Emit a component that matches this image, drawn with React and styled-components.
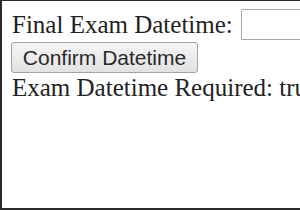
import React from "react";
import styled, { createGlobalStyle } from "styled-components";

const Global = createGlobalStyle`
  html, body { margin: 0; padding: 0; background: #fff; }
  #root { width: 300px; height: 210px; }
`;

const Frame = styled.div`
  box-sizing: border-box;
  width: 300px;
  height: 210px;
  overflow: hidden;
  border-top: 1px solid #2a2a2a;
  border-left: 2px solid #2a2a2a;
  border-bottom: 2px solid #2a2a2a;
  padding: 8px 0 0 10px;
  font-family: "Liberation Serif", "Times New Roman", serif;
  font-size: 25px;
  color: #222;
  background: #fff;
`;

const Row = styled.div`
  display: flex;
  align-items: center;
  height: 31px;
  white-space: nowrap;
`;

const Label = styled.span`
  line-height: 31px;
`;

const DateInput = styled.input`
  box-sizing: border-box;
  flex: none;
  width: 120px;
  height: 31px;
  margin: 0 0 0 8px;
  padding: 0 4px;
  border: 1px solid #a9a9a9;
  border-radius: 1px;
  background: #fff;
  font-family: "Liberation Sans", Arial, sans-serif;
  font-size: 21px;
  outline: none;
`;

const ConfirmButton = styled.button`
  display: block;
  box-sizing: border-box;
  margin: 2px 0 0 -1px;
  width: 187px;
  height: 31px;
  padding: 0;
  border: 1px solid #a3a3a3;
  border-radius: 3px;
  background: linear-gradient(#f5f5f5, #e2e2e2);
  font-family: "Liberation Sans", Arial, sans-serif;
  font-size: 21px;
  color: #2a2a2a;
  text-align: center;
`;

const Status = styled.div`
  white-space: nowrap;
  line-height: 29px;
`;

export default function App() {
  return (
    <>
      <Global />
      <Frame>
        <Row>
          <Label>Final Exam Datetime:</Label>
          <DateInput type="text" aria-label="Final Exam Datetime" />
        </Row>
        <ConfirmButton type="button">Confirm Datetime</ConfirmButton>
        <Status>Exam Datetime Required: true</Status>
      </Frame>
    </>
  );
}
